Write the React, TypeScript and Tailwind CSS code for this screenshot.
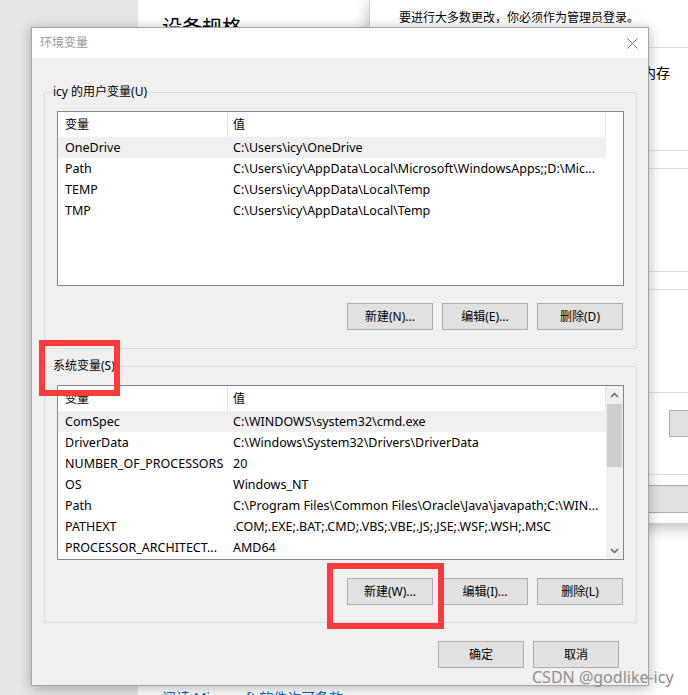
import React from 'react';

type Row = [string, string];

const userVars: Row[] = [
	['OneDrive', 'C:\\Users\\icy\\OneDrive'],
	['Path', 'C:\\Users\\icy\\AppData\\Local\\Microsoft\\WindowsApps;;D:\\Mic...'],
	['TEMP', 'C:\\Users\\icy\\AppData\\Local\\Temp'],
	['TMP', 'C:\\Users\\icy\\AppData\\Local\\Temp'],
];

const sysVars: Row[] = [
	['ComSpec', 'C:\\WINDOWS\\system32\\cmd.exe'],
	['DriverData', 'C:\\Windows\\System32\\Drivers\\DriverData'],
	['NUMBER_OF_PROCESSORS', '20'],
	['OS', 'Windows_NT'],
	['Path', 'C:\\Program Files\\Common Files\\Oracle\\Java\\javapath;C:\\WIN...'],
	['PATHEXT', '.COM;.EXE;.BAT;.CMD;.VBS;.VBE;.JS;.JSE;.WSF;.WSH;.MSC'],
	['PROCESSOR_ARCHITECT...', 'AMD64'],
];

const WinButton = ({ label, className = '' }: { label: string; className?: string }) => (
	<div
		className={`w-[86px] h-[27px] flex items-center justify-center bg-[#e1e1e1] border border-[#adadad] text-[12px] text-black ${className}`}
	>
		{label}
	</div>
);

const Chevron = ({ down }: { down?: boolean }) => (
	<svg width="9" height="6" viewBox="0 0 9 6">
		<polyline
			points={down ? '1,1 4.5,4.5 8,1' : '1,5 4.5,1.5 8,5'}
			fill="none"
			stroke="#606060"
			strokeWidth="1.5"
		/>
	</svg>
);

const VarList = ({ rows, scroll }: { rows: Row[]; scroll?: boolean }) => (
	<div className="flex h-[175px] border border-[#828790] bg-white">
		<div className="w-[548px] flex flex-col">
			{/* 헤더 */}
			<div className="flex h-[25px] text-[12px] text-black">
				<div className="w-[170px] border-r border-[#e5e5e5] pl-[7px] flex items-center">变量</div>
				<div className="w-[378px] border-r border-[#e5e5e5] pl-[5px] flex items-center">值</div>
			</div>
			{rows.map(([name, value], i) => (
				<div
					key={name + i}
					className={`flex h-[21px] items-center pt-[1px] text-[12.5px] text-black ${i === 0 ? 'bg-[#f0f0f0]' : ''}`}
				>
					<div className="w-[170px] pl-[7px] whitespace-nowrap overflow-hidden">{name}</div>
					<div className="w-[378px] pl-[5px] whitespace-nowrap overflow-hidden">{value}</div>
				</div>
			))}
		</div>
		{scroll ? (
			<div className="flex-1 flex flex-col bg-[#f0f0f0]">
				<div className="h-[17px] flex items-center justify-center">
					<Chevron />
				</div>
				<div className="flex-1 pt-[1px]">
					<div className="h-[63px] mx-[1px] bg-[#cdcdcd]" />
				</div>
				<div className="h-[17px] flex items-center justify-center">
					<Chevron down />
				</div>
			</div>
		) : (
			<div className="flex-1" />
		)}
	</div>
);

const Group = ({ title, children, bottomPad }: { title: string; children: React.ReactNode; bottomPad: string }) => (
	<div className={`relative border border-[#dcdcdc] px-[12px] pt-[18px] ${bottomPad}`}>
		<span className="absolute left-[8px] top-[-1px] -translate-y-1/2 bg-[#f0f0f0] pr-[1px] text-[12px] leading-[16px] text-black">
			{title}
		</span>
		{children}
	</div>
);

const App = () => {
	return (
		<div className="relative w-[688px] h-[695px] overflow-hidden bg-white font-['Noto_Sans','Noto_Sans_CJK_SC',sans-serif]">
			{/* 바탕 창 */}
			<div className="flex h-full">
				<div className="w-[138px] bg-[#e6e6e6]" />
				<div className="flex-1 flex flex-col pl-[24px] bg-white">
					<div className="pt-[14px] text-[20px] leading-[28px] text-black">设备规格</div>
					<div className="mt-[646px] text-[14px] leading-[20px] text-[#0067c0] whitespace-nowrap">
						阅读 Microsoft 软件许可条款
					</div>
				</div>
			</div>

			{/* 오른쪽 창 */}
			<div className="absolute left-[369px] top-0 w-[340px] h-[523px] flex flex-col bg-white border-l border-[#cfcfcf] shadow-[0_4px_14px_rgba(0,0,0,0.28)]">
				<div className="h-[47px] pl-[29px] pt-[9px] text-[12px] leading-[17px] text-black">
					要进行大多数更改，你必须作为管理员登录。
				</div>
				<div className="h-[103px] border-t border-[#dedede] pl-[272px] pt-[15px] text-[14px] leading-[20px] text-black">
					内存
				</div>
				<div className="h-[18px] border-t border-[#dedede]" />
				<div className="h-[103px] border-t border-[#dedede]" />
				<div className="h-[18px] border-t border-[#dedede]" />
				<div className="h-[103px] border-t border-[#dedede]" />
				<div className="h-[82px] border-t border-[#dedede] pl-[299px] pt-[17px]">
					<WinButton label="" />
				</div>
				<div className="flex-1 border-t border-[#dedede] flex gap-[10px] pl-[195px] pt-[10px]">
					<WinButton label="" className="h-[28px]" />
					<WinButton label="" className="h-[28px]" />
				</div>
			</div>

			{/* 환경 변수 대화 상자 */}
			<div className="absolute left-[31px] top-[27px] w-[618px] h-[659px] flex flex-col border border-[#a5a5a5] bg-[#f0f0f0] shadow-[0_2px_12px_rgba(0,0,0,0.3)]">
				<div className="h-[30px] flex items-center justify-between bg-white pl-[8px] pr-[10px]">
					<span className="text-[12px] text-[#999999]">环境变量</span>
					<svg width="11" height="11" viewBox="0 0 11 11">
						<path d="M0.5 0.5 L10.5 10.5 M10.5 0.5 L0.5 10.5" stroke="#7a7a7a" strokeWidth="1" />
					</svg>
				</div>
				<div className="flex flex-col pl-[12px] pr-[11px] pt-[34px]">
					<Group title="icy 的用户变量(U)" bottomPad="pb-[18px]">
						<VarList rows={userVars} />
						<div className="flex justify-end gap-[9px] mt-[17px] pr-[1px]">
							<WinButton label="新建(N)..." />
							<WinButton label="编辑(E)..." />
							<WinButton label="删除(D)" />
						</div>
					</Group>
					<div className="mt-[17px]">
						<Group title="系统变量(S)" bottomPad="pb-[17px]">
							<VarList rows={sysVars} scroll />
							<div className="flex justify-end gap-[9px] mt-[18px] pr-[1px]">
								<WinButton label="新建(W)..." />
								<WinButton label="编辑(I)..." />
								<WinButton label="删除(L)" />
							</div>
						</Group>
					</div>
					<div className="flex justify-end gap-[9px] mt-[18px] pr-[18px]">
						<WinButton label="确定" />
						<WinButton label="取消" />
					</div>
				</div>
			</div>

			{/* 빨간 표시 상자 */}
			<div className="absolute left-[39px] top-[340px] w-[81px] h-[56px] border-[6px] border-[#fb3a3a]" />
			<div className="absolute left-[327px] top-[563px] w-[117px] h-[66px] border-[6px] border-[#fb3a3a]" />

			{/* 워터마크 */}
			<div className="absolute left-[532px] top-[666px] text-[16px] leading-[22px] text-[#8f8f8f] whitespace-nowrap">
				CSDN @godlike-icy
			</div>
		</div>
	);
};

export default App;
